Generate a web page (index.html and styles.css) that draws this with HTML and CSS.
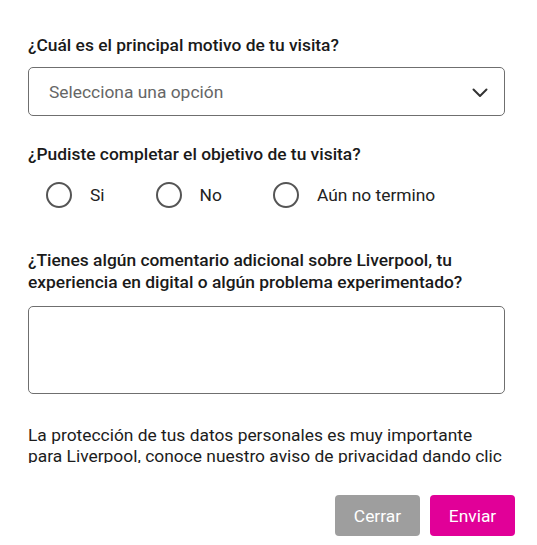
FILE: index.html
```html
<!DOCTYPE html>
<html lang="es">
<head>
<meta charset="utf-8">
<link rel="stylesheet" href="styles.css">
</head>
<body>
<form class="survey">
  <label class="question q1">¿Cuál es el principal motivo de tu visita?</label>
  <div class="select">
    <span class="placeholder">Selecciona una opción</span>
    <svg class="chevron" width="16" height="10" viewBox="0 0 16 10"><path d="M1.5 1.5 L8 8 L14.5 1.5" fill="none" stroke="#333" stroke-width="2" stroke-linecap="round" stroke-linejoin="round"/></svg>
  </div>
  <label class="question q2">¿Pudiste completar el objetivo de tu visita?</label>
  <div class="radios">
    <div class="radio r1"><span class="circle"></span><span class="rlabel">Si</span></div>
    <div class="radio r2"><span class="circle"></span><span class="rlabel">No</span></div>
    <div class="radio r3"><span class="circle"></span><span class="rlabel">Aún no termino</span></div>
  </div>
  <label class="question q3">¿Tienes algún comentario adicional sobre Liverpool, tu experiencia en digital o algún problema experimentado?</label>
  <div class="textarea"></div>
  <div class="privacy">La protección de tus datos personales es muy importante para Liverpool, conoce nuestro aviso de privacidad dando clic aquí.</div>
  <div class="actions">
    <button type="button" class="btn btn-close">Cerrar</button>
    <button type="button" class="btn btn-send">Enviar</button>
  </div>
</form>
</body>
</html>
```
FILE: styles.css
```css
* { box-sizing: border-box; }
html, body { margin: 0; padding: 0; background: #fff; }
body { font-family: Roboto, "Liberation Sans", Arial, sans-serif; color: #1c1c1c; }
.survey { display: flex; flex-direction: column; padding: 34px 22px 0 28px; width: 537px; }
.question { display: block; font-size: 17.4px; font-weight: 500; line-height: 22px; color: #1a1a1a; }
.select {
  margin-top: 11px; height: 49px; width: 477px;
  border: 1px solid #6f6f6f; border-radius: 5px;
  display: flex; align-items: center; justify-content: space-between;
  padding: 0 16px 0 20px;
}
.placeholder { font-size: 17.4px; color: #666; }
.chevron { margin-top: 3px; }
.q2 { margin-top: 27px; }
.radios { display: flex; align-items: center; margin-top: 17px; padding-left: 18px; height: 26px; }
.radio { display: flex; align-items: center; }
.circle { width: 26px; height: 26px; border: 2px solid #555; border-radius: 50%; flex: none; }
.rlabel { margin-left: 18px; font-size: 17.4px; color: #222; }
.r2 { margin-left: 51px; }
.r3 { margin-left: 51px; }
.q3 { margin-top: 41px; width: 470px; }
.textarea { margin-top: 13px; height: 88px; width: 477px; border: 1px solid #6f6f6f; border-radius: 5px; }
.privacy { margin-top: 31px; font-size: 17.4px; line-height: 21px; height: 38px; overflow: hidden; width: 478px; color: #1c1c1c; }
.actions { display: flex; justify-content: flex-end; gap: 10px; margin-top: 32px; }
.btn { border: none; border-radius: 4px; height: 41px; width: 85px; font-family: Roboto, "Liberation Sans", Arial, sans-serif; font-size: 17.4px; font-weight: 400; color: #fff; padding: 0; }
.btn-close { background: #9e9e9e; }
.btn-send { background: #e10098; }
```
